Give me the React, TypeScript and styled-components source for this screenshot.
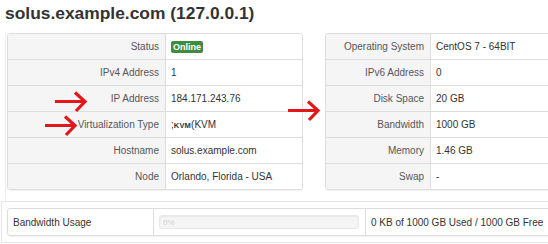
import React from 'react';
import styled, { createGlobalStyle } from 'styled-components';

type Row = {
    label: string;
    value: React.ReactNode;
}

const GlobalStyle = createGlobalStyle`
    html, body {
        margin: 0;
        padding: 0;
        background: #ffffff;
        overflow: hidden;
    }
    body {
        font-family: "Liberation Sans", Arial, sans-serif;
        color: #333333;
    }
`

const Arrow: React.FC<{ x: number; y: number }> = ({ x, y }) =>
    <ArrowMark style={{ left: x, top: y }} width="32" height="21" viewBox="0 0 32 21">
        <path d="M0 10.5 L28 10.5" stroke="#e3161c" strokeWidth="3" fill="none" />
        <path d="M20 1.5 L30 10.5 L21 20" stroke="#e3161c" strokeWidth="3.2" fill="none" strokeLinejoin="miter" />
    </ArrowMark>

const InfoTable: React.FC<{ rows: Row[]; labelWidth: number }> = ({ rows, labelWidth }) =>
    <Table>
        <tbody>
            {rows.map((row, i) => <tr key={row.label}>
                <LabelCell first={i === 0} width={labelWidth}>{row.label}</LabelCell>
                <ValueCell first={i === 0}>{row.value}</ValueCell>
            </tr>)}
        </tbody>
    </Table>

export default function App() {
    const leftRows: Row[] = [
        { label: "Status", value: <Badge>Online</Badge> },
        { label: "IPv4 Address", value: "1" },
        { label: "IP Address", value: "184.171.243.76" },
        { label: "Virtualization Type", value: <>;<Tiny>KVM</Tiny>(KVM</> },
        { label: "Hostname", value: "solus.example.com" },
        { label: "Node", value: "Orlando, Florida - USA" },
    ];
    const rightRows: Row[] = [
        { label: "Operating System", value: "CentOS 7 - 64BIT" },
        { label: "IPv6 Address", value: "0" },
        { label: "Disk Space", value: "20 GB" },
        { label: "Bandwidth", value: "1000 GB" },
        { label: "Memory", value: "1.46 GB" },
        { label: "Swap", value: "-" },
    ];

    return <Page>
        <GlobalStyle />
        <Title>solus.example.com (127.0.0.1)</Title>
        <Overview>
            <InfoTable rows={leftRows} labelWidth={158} />
            <InfoTable rows={rightRows} labelWidth={105} />
        </Overview>
        <UsagePanel>
            <UsageTable>
                <tbody>
                    <tr>
                        <UsageCell width={146}>Bandwidth Usage</UsageCell>
                        <UsageCell width={212} bar>
                            <Progress><ProgressText>0%</ProgressText></Progress>
                        </UsageCell>
                        <UsageCell last>0 KB of 1000 GB Used / 1000 GB Free</UsageCell>
                    </tr>
                </tbody>
            </UsageTable>
        </UsagePanel>
        <Arrow x={55} y={91} />
        <Arrow x={45} y={115} />
        <Arrow x={288} y={100} />
    </Page>
}

const Page = styled.div`
    position: relative;
    width: 548px;
    height: 244px;
    overflow: hidden;
`

const Title = styled.h2`
    margin: 0;
    padding: 1px 0 0 5px;
    height: 25px;
    font-size: 17.4px;
    line-height: 25px;
    font-weight: bold;
    color: #333333;
    white-space: nowrap;
`

const Overview = styled.div`
    display: grid;
    grid-template-columns: 296px 296px;
    column-gap: 22px;
    margin-top: 7px;
    margin-left: 5px;
    padding-left: 1px;
    border-left: 1px solid #ececec;
    padding-bottom: 11px;
`

const Table = styled.table`
    border-collapse: separate;
    border-spacing: 0;
    border: 1px solid #dddddd;
    border-radius: 3px;
    box-shadow: 0 1px 1px rgba(0, 0, 0, 0.06);
    font-size: 10px;
    width: 296px;
    overflow: hidden;
`

const LabelCell = styled.td<{ first: boolean; width: number }>`
    width: ${props => props.width}px;
    box-sizing: border-box;
    height: ${props => props.first ? 25 : 26}px;
    padding: 0 6px;
    text-align: right;
    color: #555555;
    background: #f5f5f5;
    border-right: 1px solid #dddddd;
    border-top: ${props => props.first ? "none" : "1px solid #dddddd"};
    white-space: nowrap;
`

const ValueCell = styled.td<{ first: boolean }>`
    padding: 0 5px;
    text-align: left;
    color: #333333;
    background: #ffffff;
    border-top: ${props => props.first ? "none" : "1px solid #dddddd"};
    white-space: nowrap;
`

const Badge = styled.span`
    display: inline-block;
    padding: 0 2px;
    height: 12px;
    line-height: 12px;
    font-size: 9px;
    font-weight: bold;
    color: #ffffff;
    background: #3f8b3f;
    border-radius: 2px;
    vertical-align: middle;
`

const Tiny = styled.span`
    font-size: 7.5px;
    font-weight: bold;
    letter-spacing: 0.2px;
`

const UsagePanel = styled.div`
    margin-left: 1px;
    padding: 6px 0 6px 5px;
    border: 1px solid #e6e6e6;
    border-right: none;
`

const UsageTable = styled.table`
    border-collapse: separate;
    border-spacing: 0;
    border: 1px solid #dddddd;
    border-radius: 3px;
    box-shadow: 0 1px 1px rgba(0, 0, 0, 0.06);
    font-size: 10px;
    width: 560px;
`

const UsageCell = styled.td<{ width?: number; last?: boolean; bar?: boolean }>`
    ${props => props.width ? `width: ${props.width}px;` : ""}
    box-sizing: border-box;
    height: 26px;
    padding: ${props => props.bar ? "0 6px 0 5px" : "0 5px"};
    color: #333333;
    border-right: ${props => props.last ? "none" : "1px solid #dddddd"};
    white-space: nowrap;
`

const Progress = styled.div`
    height: 14px;
    background: #f5f5f5;
    border: 1px solid #e8e8e8;
    border-radius: 3px;
    box-sizing: border-box;
    box-shadow: inset 0 1px 2px rgba(0, 0, 0, 0.06);
    display: flex;
    align-items: center;
    padding-left: 3px;
`

const ProgressText = styled.span`
    font-size: 8px;
    color: #cfcfcf;
`

const ArrowMark = styled.svg`
    position: absolute;
    overflow: visible;
`
